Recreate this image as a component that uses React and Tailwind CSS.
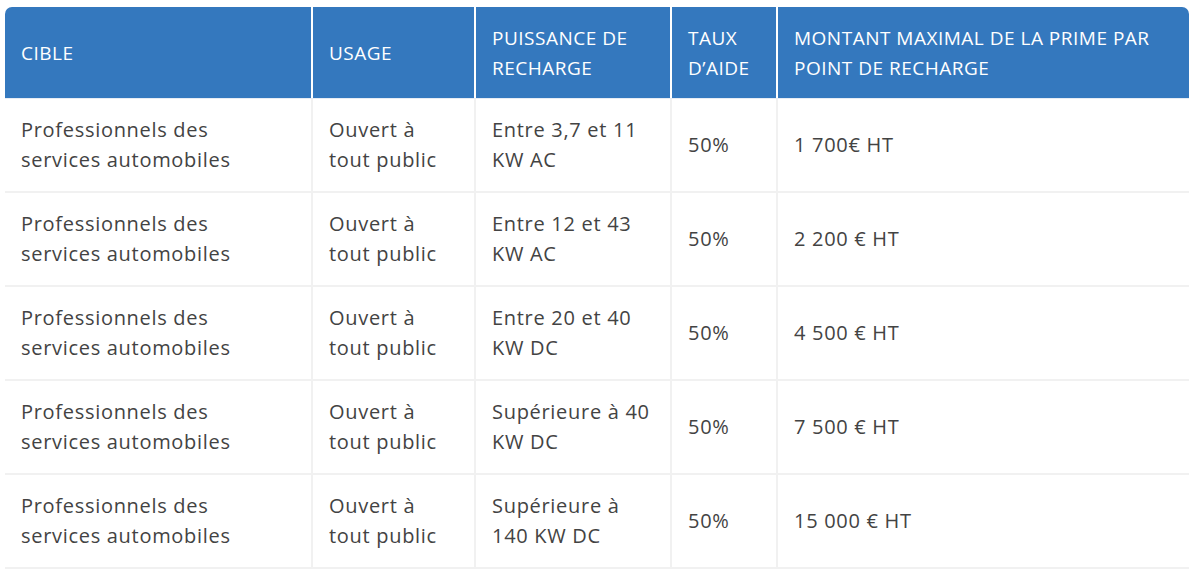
import React from 'react';

const rows = [
  { power: ['Entre 3,7 et 11', 'KW AC'], amount: '1 700€ HT' },
  { power: ['Entre 12 et 43', 'KW AC'], amount: '2 200 € HT' },
  { power: ['Entre 20 et 40', 'KW DC'], amount: '4 500 € HT' },
  { power: ['Supérieure à 40', 'KW DC'], amount: '7 500 € HT' },
  { power: ['Supérieure à', '140 KW DC'], amount: '15 000 € HT' },
];

const cols = 'grid grid-cols-[306px_161px_194px_104px_411px] gap-x-[2px]';

function Cell({ children, head }) {
  return (
    <div
      className={
        head
          ? 'flex items-center px-4 bg-[#3478be] text-white text-[19px] tracking-[0.5px]'
          : 'flex items-center px-4 bg-white text-[#434343] text-[20px] tracking-[0.7px]'
      }
    >
      <div>{children}</div>
    </div>
  );
}

export default function App() {
  return (
    <div
      className="w-[1200px] h-[578px] bg-white pt-[7px] pl-[5px]"
      style={{ fontFamily: '"Open Sans", "Noto Sans", sans-serif' }}
    >
      <div className="w-[1184px] leading-[30px]">
        {/* en-tête */}
        <div className={`${cols} h-[91px] bg-white rounded-t-[7px] overflow-hidden`}>
          <Cell head>CIBLE</Cell>
          <Cell head>USAGE</Cell>
          <Cell head>
            PUISSANCE DE
            <br />
            RECHARGE
          </Cell>
          <Cell head>
            TAUX
            <br />
            D’AIDE
          </Cell>
          <Cell head>
            MONTANT MAXIMAL DE LA PRIME PAR
            <br />
            POINT DE RECHARGE
          </Cell>
        </div>
        <div className="h-[1px] bg-[#e6ecf4]" />

        {rows.map((r, i) => (
          <div key={i} className={`${cols} h-[94px] bg-[#f1f1f1] border-b-2 border-[#f1f1f1]`}>
            <Cell>
              Professionnels des
              <br />
              services automobiles
            </Cell>
            <Cell>
              Ouvert à
              <br />
              tout public
            </Cell>
            <Cell>
              {r.power[0]}
              <br />
              {r.power[1]}
            </Cell>
            <Cell>50%</Cell>
            <Cell>{r.amount}</Cell>
          </div>
        ))}
      </div>
    </div>
  );
}
